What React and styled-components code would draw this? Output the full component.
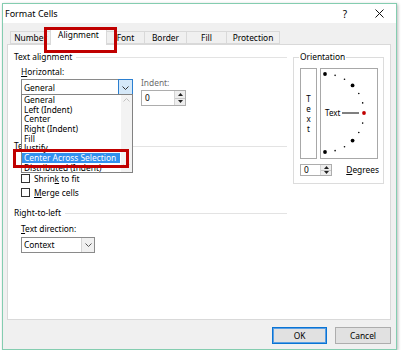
import React from "react";
import styled, { createGlobalStyle } from "styled-components";

const FONT = `"Noto Sans", "Open Sans", sans-serif`;

const GlobalStyle = createGlobalStyle`
  html, body { margin: 0; padding: 0; background: #ffffff; }
  body { font-family: ${FONT}; font-size: 8.4px; color: #000; }
  * { box-sizing: border-box; }
  u { text-decoration-thickness: 1px; text-underline-offset: 1px; }
`;

const Page = styled.div`
  padding: 3px 0 0 2px;
`;

const Window = styled.div`
  position: relative;
  width: 395px;
  height: 347px;
  border: 1px solid #84cdb0;
  background: #f0f0f0;
  box-shadow: 1px 1px 3px rgba(0, 0, 0, 0.28);
  display: flex;
  flex-direction: column;
`;

const TitleBar = styled.div`
  height: 19px;
  background: #ffffff;
  display: flex;
  align-items: center;
  padding-left: 2px;
`;

const Title = styled.div`
  flex: 1;
  font-size: 9px;
  line-height: 19px;
`;

const TitleButton = styled.div`
  width: 34px;
  height: 19px;
  display: flex;
  align-items: center;
  justify-content: center;
  font-size: 10px;
`;

const Body = styled.div`
  flex: 1;
  display: flex;
  flex-direction: column;
  padding: 4px 5px 0 4px;
`;

const TabStrip = styled.div`
  display: flex;
  align-items: flex-end;
  height: 17px;
  padding-left: 3px;
`;

const Tab = styled.div`
  position: relative;
  width: ${(p) => p.$w}px;
  height: ${(p) => (p.$active ? 18 : 13)}px;
  margin-left: ${(p) => (p.$first ? 0 : -1)}px;
  margin-bottom: ${(p) => (p.$active ? -1 : 0)}px;
  z-index: ${(p) => (p.$active ? 2 : 1)};
  border: 1px solid #d9d9d9;
  border-bottom: ${(p) => (p.$active ? "none" : "1px solid #d9d9d9")};
  background: ${(p) => (p.$active ? "#ffffff" : "#f0f0f0")};
  display: flex;
  align-items: center;
  justify-content: center;
  padding-bottom: ${(p) => (p.$active ? 3 : 0)}px;
  line-height: 10px;
`;

const Panel = styled.div`
  position: relative;
  height: 276px;
  background: #ffffff;
  border: 1px solid #d9d9d9;
  display: flex;
  padding: 7px 6px 0 0;
`;

const LeftColumn = styled.div`
  width: 282px;
  padding: 0 3px 0 6px;
  display: flex;
  flex-direction: column;
`;

const GroupHeader = styled.div`
  display: flex;
  align-items: center;
  height: 10px;
  line-height: 10px;
  margin-top: ${(p) => p.$mt || 0}px;
  white-space: nowrap;
  &::after {
    content: "";
    flex: 1;
    height: 1px;
    background: #e3e3e3;
    margin-left: 4px;
  }
`;

const Indented = styled.div`
  padding-left: 7px;
  display: flex;
  flex-direction: column;
`;

const Label = styled.div`
  height: 10px;
  line-height: 10px;
  margin-top: ${(p) => p.$mt || 0}px;
  color: ${(p) => (p.$disabled ? "#6d6d6d" : "#000")};
  white-space: nowrap;
`;

const Row = styled.div`
  display: flex;
  align-items: flex-start;
`;

const Stack = styled.div`
  display: flex;
  flex-direction: column;
  margin-top: ${(p) => p.$mt || 0}px;
  margin-left: ${(p) => p.$ml || 0}px;
`;

const ComboBox = styled.div`
  position: relative;
  width: ${(p) => p.$w}px;
  height: ${(p) => p.$h}px;
  margin-top: ${(p) => p.$mt || 0}px;
  border: 1px solid #8a8a8a;
  background: #ffffff;
  display: flex;
`;

const ComboText = styled.div`
  flex: 1;
  padding-left: 2px;
  display: flex;
  align-items: center;
  line-height: 10px;
`;

const ComboButton = styled.div`
  width: ${(p) => (p.$hot ? 15 : 13)}px;
  margin: ${(p) => (p.$hot ? "-1px -1px -1px 0" : "0")};
  display: flex;
  align-items: center;
  justify-content: center;
  background: ${(p) => (p.$hot ? "#d5e8f8" : "#f0f0f0")};
  border: ${(p) => (p.$hot ? "1px solid #2b7fd0" : "none")};
  border-left: 1px solid ${(p) => (p.$hot ? "#2b7fd0" : "#d4d4d4")};
`;

const DropList = styled.div`
  position: absolute;
  top: calc(100% - 1px);
  left: -1px;
  width: 112px;
  height: 79px;
  border: 1px solid #828282;
  background: #ffffff;
  display: flex;
  z-index: 5;
`;

const ListItems = styled.div`
  flex: 1;
`;

const ListItem = styled.div`
  height: 9.7px;
  line-height: 9.7px;
  padding-left: 2px;
  margin-right: 1px;
  white-space: nowrap;
  background: ${(p) => (p.$selected ? "#3390ee" : "transparent")};
  color: ${(p) => (p.$selected ? "#ffffff" : "#000")};
`;

const ScrollTrack = styled.div`
  width: 11px;
  background: #f3f3f3;
  display: flex;
  flex-direction: column;
  justify-content: space-between;
  align-items: center;
  padding: 3px 0 4px;
`;

const Spinner = styled.div`
  width: ${(p) => p.$w}px;
  height: ${(p) => p.$h}px;
  margin-top: ${(p) => p.$mt || 0}px;
  border: 1px solid #adadad;
  background: #ffffff;
  display: flex;
`;

const SpinValue = styled.div`
  flex: 1;
  padding-left: 3px;
  display: flex;
  align-items: center;
  line-height: 10px;
`;

const SpinButtons = styled.div`
  width: 11px;
  border-left: 1px solid #d4d4d4;
  background: #eeeeee;
  display: flex;
  flex-direction: column;
`;

const SpinHalf = styled.div`
  flex: 1;
  display: flex;
  align-items: center;
  justify-content: center;
  border-top: ${(p) => (p.$bottom ? "1px solid #c8c8c8" : "none")};
`;

const CheckRow = styled.label`
  display: flex;
  align-items: center;
  height: 9px;
  margin-top: ${(p) => p.$mt || 0}px;
  line-height: 10px;
  white-space: nowrap;
`;

const CheckBox = styled.span`
  width: 9px;
  height: 9px;
  border: 1px solid #333333;
  background: #ffffff;
  margin-right: 4px;
  flex: none;
`;

const Fieldset = styled.fieldset`
  margin: 0 0 0 3px;
  width: 91px;
  height: 132px;
  border: 1px solid #dcdcdc;
  padding: 0 4px 0 6px;
  min-width: 0;
  display: flex;
  flex-direction: column;
`;

const Legend = styled.legend`
  padding: 0 1px;
  margin-left: -1px;
  height: 10px;
  line-height: 10px;
  font-size: 8.4px;
`;

const OrientRow = styled.div`
  display: flex;
  gap: 3px;
  margin-top: 6px;
`;

const VerticalText = styled.div`
  width: 17px;
  height: 91px;
  border: 1px solid #a8a8a8;
  display: flex;
  flex-direction: column;
  align-items: center;
  justify-content: center;
  font-size: 8px;
  line-height: 10px;
`;

const Dial = styled.div`
  width: 58px;
  height: 91px;
  border: 1px solid #a8a8a8;
  display: flex;
`;

const DegreesRow = styled.div`
  display: flex;
  align-items: center;
  margin-top: 5px;
`;

const DegreesLabel = styled.div`
  margin-left: 14px;
  line-height: 10px;
`;

const Footer = styled.div`
  display: flex;
  justify-content: flex-end;
  gap: 8px;
  padding-top: 7px;
`;

const Button = styled.div`
  width: ${(p) => p.$w}px;
  height: 17px;
  background: #e1e1e1;
  border: 1px solid ${(p) => (p.$default ? "#0a74d4" : "#adadad")};
  box-shadow: ${(p) => (p.$default ? "inset 0 0 0 1px #5b9fe3" : "none")};
  display: flex;
  align-items: center;
  justify-content: center;
  line-height: 10px;
`;

const RedBox = styled.div`
  position: absolute;
  left: ${(p) => p.$x}px;
  top: ${(p) => p.$y}px;
  width: ${(p) => p.$w}px;
  height: ${(p) => p.$h}px;
  border: 3px solid #c00000;
  z-index: 10;
  pointer-events: none;
`;

const ChevronIcon = ({ up = false, color = "#333" }) => (
  <svg width="7" height="4" viewBox="0 0 7 4">
    <polyline
      points={up ? "0.5,3.5 3.5,0.5 6.5,3.5" : "0.5,0.5 3.5,3.5 6.5,0.5"}
      fill="none"
      stroke={color}
      strokeWidth="1"
    />
  </svg>
);

const Tri = ({ up = false }) => (
  <svg width="5" height="3" viewBox="0 0 5 3">
    <polygon points={up ? "0,3 2.5,0 5,3" : "0,0 2.5,3 5,0"} fill="#222" />
  </svg>
);

const CloseIcon = () => (
  <svg width="9" height="9" viewBox="0 0 9 9">
    <path d="M0.5 0.5 L8.5 8.5 M8.5 0.5 L0.5 8.5" stroke="#111" strokeWidth="1" />
  </svg>
);

const DialDrawing = () => {
  const cx = 4;
  const cy = 44;
  const r = 39;
  const angles = [90, 75, 60, 45, 30, 15, 0, -15, -30, -45, -60, -75, -90];
  return (
    <svg width="56" height="89" viewBox="0 0 56 89">
      {angles.map((a) => {
        const rad = (a * Math.PI) / 180;
        const x = cx + r * Math.cos(rad);
        const y = cy - r * Math.sin(rad);
        const big = a % 45 === 0;
        const red = a === 0;
        return (
          <circle
            key={a}
            cx={x}
            cy={y}
            r={big ? 1.9 : 0.8}
            fill={red ? "#c00000" : "#000"}
          />
        );
      })}
      <text x="4" y="47" fontSize="8" fontFamily={FONT} fill="#000">
        Text
      </text>
      <line x1="21" y1="44" x2="38" y2="44" stroke="#000" strokeWidth="1" />
    </svg>
  );
};

const options = [
  "General",
  "Left (Indent)",
  "Center",
  "Right (Indent)",
  "Fill",
  "Justify",
  "Center Across Selection",
  "Distributed (Indent)",
];

const tabs = [
  { name: "Number", w: 41 },
  { name: "Alignment", w: 57, active: true },
  { name: "Font", w: 39 },
  { name: "Border", w: 43 },
  { name: "Fill", w: 41 },
  { name: "Protection", w: 54 },
];

export default function App() {
  return (
    <Page>
      <GlobalStyle />
      <Window>
        <TitleBar>
          <Title>Format Cells</Title>
          <TitleButton>?</TitleButton>
          <TitleButton>
            <CloseIcon />
          </TitleButton>
        </TitleBar>
        <Body>
          <TabStrip>
            {tabs.map((t, i) => (
              <Tab key={t.name} $w={t.w} $active={t.active} $first={i === 0}>
                {t.name}
              </Tab>
            ))}
          </TabStrip>
          <Panel>
            <LeftColumn>
              <GroupHeader>Text alignment</GroupHeader>
              <Indented>
                <Row>
                  <Stack $mt={5}>
                    <Label>
                      <u>H</u>orizontal:
                    </Label>
                    <ComboBox $w={112} $h={17} $mt={2}>
                      <ComboText>General</ComboText>
                      <ComboButton $hot>
                        <ChevronIcon color="#333" />
                      </ComboButton>
                      <DropList>
                        <ListItems>
                          {options.map((o) => (
                            <ListItem key={o} $selected={o === "Center Across Selection"}>
                              {o}
                            </ListItem>
                          ))}
                        </ListItems>
                        <ScrollTrack>
                          <ChevronIcon up color="#c2c2c2" />
                          <ChevronIcon color="#c2c2c2" />
                        </ScrollTrack>
                      </DropList>
                    </ComboBox>
                  </Stack>
                  <Stack $mt={16} $ml={8}>
                    <Label $disabled>Indent:</Label>
                    <Spinner $w={45} $h={16} $mt={2}>
                      <SpinValue>0</SpinValue>
                      <SpinButtons>
                        <SpinHalf>
                          <Tri up />
                        </SpinHalf>
                        <SpinHalf $bottom>
                          <Tri />
                        </SpinHalf>
                      </SpinButtons>
                    </Spinner>
                  </Stack>
                </Row>
              </Indented>
              <GroupHeader $mt={35}>Text control</GroupHeader>
              <Indented>
                <CheckRow $mt={23}>
                  <CheckBox />
                  <span>
                    Shrin<u>k</u> to fit
                  </span>
                </CheckRow>
                <CheckRow $mt={5}>
                  <CheckBox />
                  <span>
                    <u>M</u>erge cells
                  </span>
                </CheckRow>
              </Indented>
              <GroupHeader $mt={11}>Right-to-left</GroupHeader>
              <Indented>
                <Label $mt={6}>
                  <u>T</u>ext direction:
                </Label>
                <ComboBox $w={74} $h={16} $mt={3}>
                  <ComboText>Context</ComboText>
                  <ComboButton>
                    <ChevronIcon color="#555" />
                  </ComboButton>
                </ComboBox>
              </Indented>
            </LeftColumn>
            <Fieldset>
              <Legend>Orientation</Legend>
              <OrientRow>
                <VerticalText>
                  <span>T</span>
                  <span>e</span>
                  <span>x</span>
                  <span>t</span>
                </VerticalText>
                <Dial>
                  <DialDrawing />
                </Dial>
              </OrientRow>
              <DegreesRow>
                <Spinner $w={34} $h={12}>
                  <SpinValue>0</SpinValue>
                  <SpinButtons>
                    <SpinHalf>
                      <Tri up />
                    </SpinHalf>
                    <SpinHalf $bottom>
                      <Tri />
                    </SpinHalf>
                  </SpinButtons>
                </Spinner>
                <DegreesLabel>
                  <u>D</u>egrees
                </DegreesLabel>
              </DegreesRow>
            </Fieldset>
            <RedBox $x={5} $y={104} $w={116} $h={19} />
          </Panel>
          <Footer>
            <Button $w={55} $default>
              OK
            </Button>
            <Button $w={56}>Cancel</Button>
          </Footer>
        </Body>
        <RedBox $x={41} $y={23} $w={73} $h={26} />
      </Window>
    </Page>
  );
}
